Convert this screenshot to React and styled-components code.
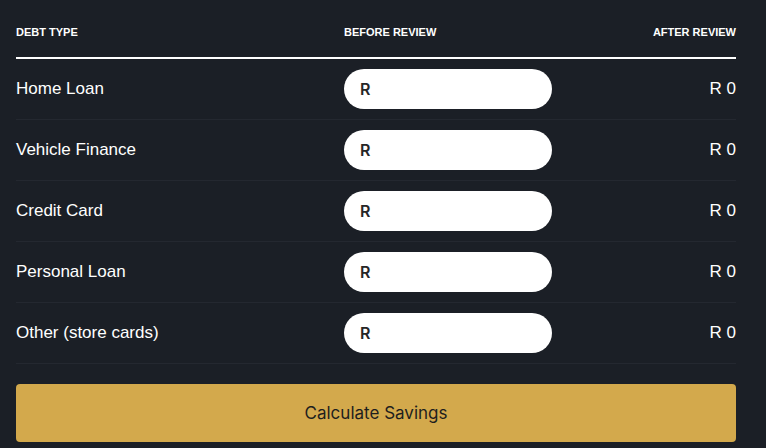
import styled, { createGlobalStyle } from 'styled-components'

const GlobalStyle = createGlobalStyle`
  html, body {
    margin: 0;
    padding: 0;
    background: #1b1f26;
  }
  body {
    font-family: "Liberation Sans", Arial, sans-serif;
    color: #fff;
  }
`

const Wrapper = styled.div`
  padding: 0 30px 0 16px;
  width: 720px;
`

const Grid = styled.div`
  display: grid;
  grid-template-columns: 328px 1fr auto;
  align-items: center;
`

const HeadRow = styled(Grid)`
  height: 57px;
  align-items: end;
  border-bottom: 2px solid #fff;
`

const HeadCell = styled.div`
  font-size: 11px;
  font-weight: 700;
  line-height: 13px;
  padding-bottom: 18px;
  text-align: ${({ $right }) => ($right ? 'right' : 'left')};
`

const Row = styled(Grid)`
  height: 60px;
  border-bottom: 1px solid #242830;
`

const Label = styled.div`
  font-size: 17px;
`

const MoneyInput = styled.label`
  display: flex;
  align-items: center;
  width: 208px;
  height: 40px;
  box-sizing: border-box;
  padding: 0 16px;
  border-radius: 20px;
  background: #fff;
  color: #262626;
  font-family: Inter, "Noto Sans", sans-serif;
  font-weight: 600;
  font-size: 16px;
  input {
    border: none;
    outline: none;
    background: transparent;
    flex: 1;
    min-width: 0;
    font: inherit;
    margin-left: 4px;
  }
`

const Amount = styled.div`
  font-size: 17px;
  text-align: right;
`

const CalcButton = styled.button`
  display: block;
  width: 100%;
  height: 58px;
  margin-top: 20px;
  border: none;
  border-radius: 4px;
  background: #d3a94c;
  color: #1e1e1e;
  font-family: Inter, "Noto Sans", sans-serif;
  font-size: 17px;
  cursor: pointer;
`

const debts = ['Home Loan', 'Vehicle Finance', 'Credit Card', 'Personal Loan', 'Other (store cards)']

const App = () => (
  <>
    <GlobalStyle />
    <Wrapper>
      <HeadRow>
        <HeadCell>DEBT TYPE</HeadCell>
        <HeadCell>BEFORE REVIEW</HeadCell>
        <HeadCell $right>AFTER REVIEW</HeadCell>
      </HeadRow>
      {debts.map((name) => (
        <Row key={name}>
          <Label>{name}</Label>
          <MoneyInput>
            R
            <input type="text" />
          </MoneyInput>
          <Amount>R 0</Amount>
        </Row>
      ))}
      <CalcButton>Calculate Savings</CalcButton>
    </Wrapper>
  </>
)

export default App
